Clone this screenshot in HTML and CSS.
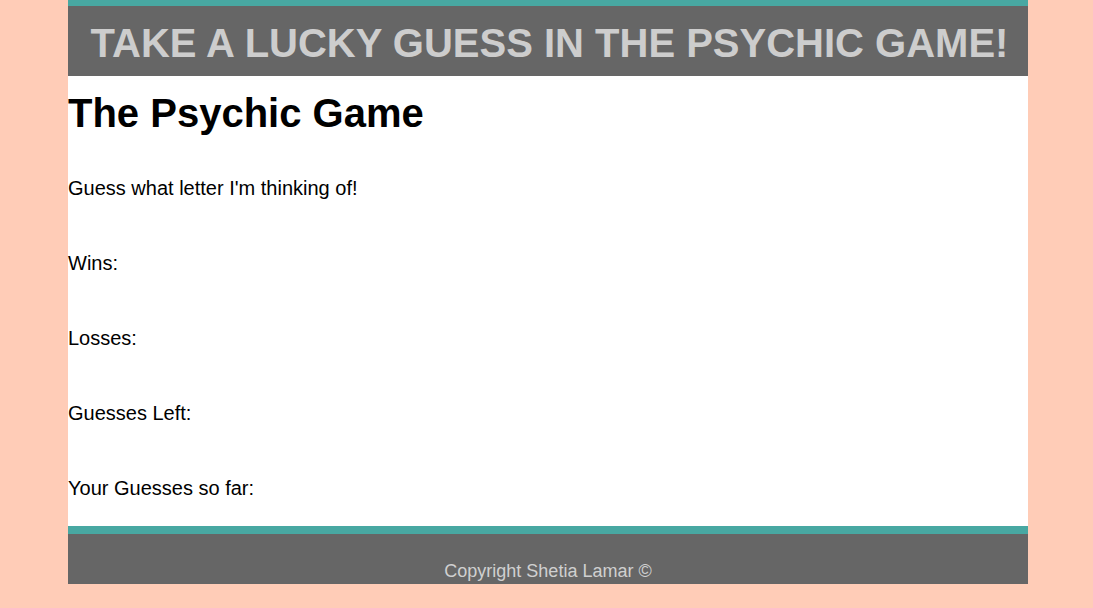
FILE: index.html
```html
<!DOCTYPE html>
<html lang="en">
<head>
<meta charset="utf-8">
<title>The Psychic Game</title>
<link rel="stylesheet" href="styles.css">
</head>
<body>
<div class="page">
  <header class="banner">
    <h2 class="banner-title">TAKE A LUCKY GUESS IN THE PSYCHIC GAME!</h2>
  </header>
  <main class="game">
    <h1 class="game-title">The Psychic Game</h1>
    <div class="stats">
      <p class="stat">Guess what letter I'm thinking of!</p>
      <p class="stat">Wins: <span id="wins"></span></p>
      <p class="stat">Losses: <span id="losses"></span></p>
      <p class="stat">Guesses Left: <span id="left"></span></p>
      <p class="stat">Your Guesses so far: <span id="guesses"></span></p>
    </div>
  </main>
  <footer class="footer">
    <p class="copy">Copyright Shetia Lamar &copy;</p>
  </footer>
</div>
</body>
</html>
```

FILE: styles.css
```css
html, body {
  margin: 0;
  padding: 0;
}
body {
  background: #ffccb7;
  font-family: "Liberation Sans", Arial, sans-serif;
  color: #000;
}
.page {
  width: 960px;
  margin: 0 0 0 68px;
}
.banner {
  background: #666666;
  border-top: 6px solid #48a8a2;
  height: 70px;
  display: flex;
  align-items: center;
  justify-content: center;
}
.banner-title {
  margin: 0;
  font-size: 40px;
  font-weight: bold;
  color: #cdcdcd;
  line-height: 46px;
  padding-top: 4px;
  padding-left: 3px;
}
.game {
  background: #ffffff;
  height: 450px;
  display: flex;
  flex-direction: column;
}
.game-title {
  margin: 14px 0 0;
  font-size: 40px;
  line-height: 46px;
  font-weight: bold;
}
.stats {
  display: flex;
  flex-direction: column;
  gap: 52px;
  margin-top: 41px;
}
.stat {
  margin: 0;
  font-size: 20px;
  line-height: 23px;
}
.footer {
  background: #666666;
  border-top: 8px solid #48a8a2;
  height: 50px;
  box-sizing: content-box;
  text-align: center;
}
.copy {
  margin: 0;
  padding-top: 27px;
  font-size: 18px;
  line-height: 21px;
  color: #d0d0d0;
}
```
